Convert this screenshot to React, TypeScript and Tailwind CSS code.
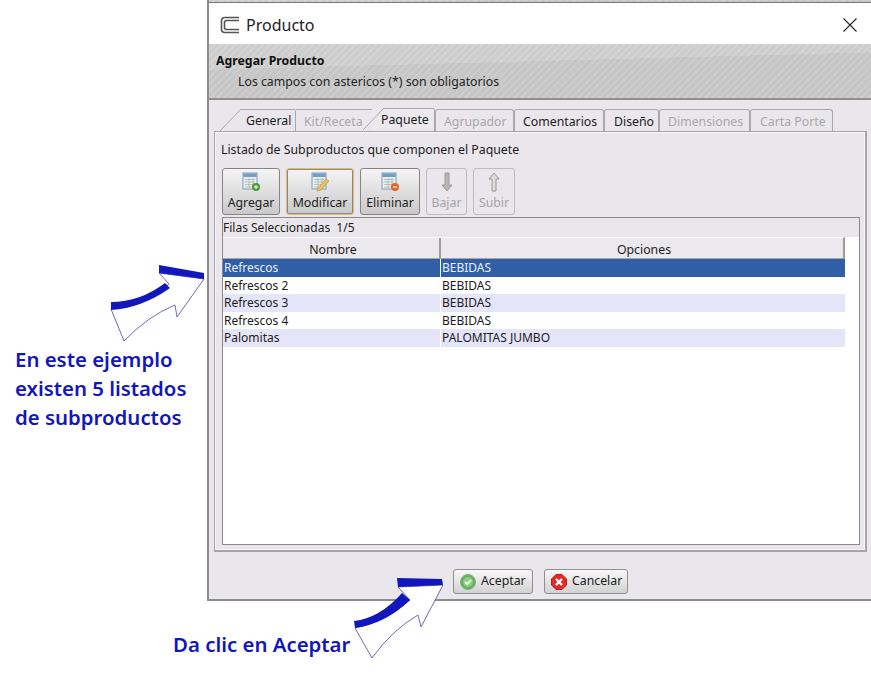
const hatch =
  "bg-[linear-gradient(178.5deg,transparent_36%,rgba(0,0,0,0.035)_36%),repeating-linear-gradient(135deg,#cdcdcd_0px,#cdcdcd_3px,#d4d4d4_3px,#d4d4d4_5px)]";

const tabs = [
  { label: "General", width: "w-[76px]", pl: "pl-[26px]", slant: true },
  { label: "Kit/Receta", width: "w-[76px]", pl: "pl-[8px]", off: true, open: true },
  { label: "Paquete", width: "w-[63px]", pl: "pl-[9px]", active: true, slant: true },
  { label: "Agrupador", width: "w-[79px]", pl: "pl-[8px]", off: true },
  { label: "Comentarios", width: "w-[90px]", pl: "pl-[8px]" },
  { label: "Diseño", width: "w-[55px]", pl: "pl-[9px]" },
  { label: "Dimensiones", width: "w-[91px]", pl: "pl-[8px]", off: true },
  { label: "Carta Porte", width: "w-[83px]", pl: "pl-[9px]", off: true },
];

const rows = [
  ["Refrescos", "BEBIDAS"],
  ["Refrescos 2", "BEBIDAS"],
  ["Refrescos 3", "BEBIDAS"],
  ["Refrescos 4", "BEBIDAS"],
  ["Palomitas", "PALOMITAS JUMBO"],
];

const SheetIcon = ({ children }: { children?: React.ReactNode }) => (
  <svg width="20" height="20" viewBox="0 0 20 20" className="block">
    <rect x="2" y="1" width="14" height="16" fill="#e8eef4" stroke="#7e9bb4" />
    <rect x="2.5" y="1.5" width="13" height="3.5" fill="#6f9ec6" />
    <path d="M4 7.5h10M4 10h10M4 12.5h10M4 15h10M8 6v10M12 6v10" stroke="#a9b9a0" strokeWidth="0.8" />
    {children}
  </svg>
);

const ArrowIcon = ({ down }: { down?: boolean }) => (
  <svg width="14" height="20" viewBox="0 0 14 20" className="block">
    <path
      d={down ? "M5 1h4v12h3l-5 6-5-6h3z" : "M5 19h4V7h3L7 1 2 7h3z"}
      fill={down ? "#b5b5b5" : "#dcdcdc"}
      stroke="#9a9a9a"
    />
  </svg>
);

const ToolButton = ({
  label,
  width,
  icon,
  focus,
  off,
}: {
  label: string;
  width: string;
  icon: React.ReactNode;
  focus?: boolean;
  off?: boolean;
}) => (
  <div
    className={`${width} h-[47px] flex flex-col items-center rounded-[3px] border pt-[3px] ${
      off
        ? "border-[#bdbcc0] bg-[#e9e7ec] text-[#a5a5a8]"
        : focus
          ? "border-[#e9b767] bg-gradient-to-b from-[#f5f5f5] to-[#c9c9c9] text-[#1c1c1c] shadow-[inset_0_0_0_1px_#8a8a8a]"
          : "border-[#858585] bg-gradient-to-b from-[#f5f5f5] to-[#c9c9c9] text-[#1c1c1c]"
    }`}
  >
    {icon}
    <span className="mt-[3px] leading-[16px]">{label}</span>
  </div>
);

const FooterButton = ({ label, width, icon }: { label: string; width: string; icon: React.ReactNode }) => (
  <div
    className={`${width} h-[25px] flex items-center gap-[5px] pl-[6px] rounded-[3px] border border-[#8f8f8f] bg-gradient-to-b from-[#f8f8f8] to-[#d2d2d2] text-[#1c1c1c]`}
  >
    {icon}
    <span>{label}</span>
  </div>
);

export default function App() {
  return (
    <div className="relative w-[871px] h-[674px] overflow-hidden bg-white font-['Noto_Sans',sans-serif]">
      <div className="flex h-[601px]">
        {/* left note */}
        <div className="w-[207px] pl-[15px] pt-[345px] text-[20.400px] leading-[29px] font-semibold text-[#1216bd]">
          <p>En este ejemplo</p>
          <p>existen 5 listados</p>
          <p>de subproductos</p>
        </div>

        {/* window */}
        <div className="w-[664px] flex flex-col border-l-2 border-b-2 border-[#8c8c8c] text-[12.300px] text-[#1c1c1c]">
          <div className={`h-[3px] ${hatch} border-b border-[#777]`} />
          <div className="h-[41px] bg-white flex items-center pl-[11px] pr-[13px] pt-[2px] shrink-0">
            <svg width="20" height="18" viewBox="0 0 20 18" fill="none" stroke="#555" className="mr-[6px]">
              <path d="M19 1.5H5Q1.5 1.5 1.5 5v8q0 3.5 3.5 3.5h14" strokeWidth="1.6" />
              <path d="M19 4.5H6.5Q4.5 4.5 4.5 6.5v5q0 2 2 2H19" strokeWidth="1.6" />
            </svg>
            <span className="text-[16px] text-[#222]">Producto</span>
            <svg width="16" height="16" viewBox="0 0 16 16" stroke="#222" strokeWidth="1.1" className="ml-auto">
              <path d="M1.5 1.5l13 13M14.5 1.5l-13 13" />
            </svg>
          </div>
          <div className={`h-[56px] shrink-0 ${hatch} border-b-2 border-[#8f8f8f] pl-[7px] pt-[8px]`}>
            <p className="font-bold leading-[17px] text-[#111]">Agregar Producto</p>
            <p className="pl-[22px] mt-[5px] leading-[16px] text-[#222]">Los campos con astericos (*) son obligatorios</p>
          </div>

          <div className="flex-1 bg-[#e9e7ec] flex flex-col">
            {/* tabs */}
            <div className="flex h-[22px] mt-[9px] ml-[6px] pl-[5px] shrink-0 relative z-10 items-end">
              {tabs.map((t) => (
                <div
                  key={t.label}
                  className={`relative ${t.width} ${t.pl} h-[22px] leading-[23px] border-[#a9a9ad] ${
                    t.slant ? "border-r rounded-tr-[3px]" : t.open ? "border-t" : "border-t border-r rounded-tr-[3px]"
                  } ${t.off ? "text-[#a7a7aa]" : t.active ? "text-[#1c1c1c] bg-[#ebe9ee] h-[23px]" : "text-[#1c1c1c]"} ${
                    t.slant || t.open ? "" : "border-l rounded-tl-[3px]"
                  }`}
                >
                  {t.slant && (
                    <>
                      <svg
                        width="24"
                        height="23"
                        viewBox="0 0 24 23"
                        className={`absolute top-[-1px] ${t.active ? "left-[-10px]" : "left-[-1px]"}`}
                      >
                        <path d="M1 23L22 1" stroke="#a9a9ad" fill="none" />
                      </svg>
                      <span
                        className={`absolute top-0 right-0 h-px bg-[#a9a9ad] ${t.active ? "left-[11px]" : "left-[20px]"}`}
                      />
                    </>
                  )}
                  {t.label}
                </div>
              ))}
            </div>

            {/* tab panel */}
            <div className="w-[653px] h-[421px] ml-[5px] border border-[#a5a5a8] border-b-2 border-r-2 shadow-[inset_0_0_0_1px_#f7f7f9] flex flex-col pl-[7px] pr-[6px]">
              <p className="mt-[9px] -ml-px leading-[17px]">Listado de Subproductos que componen el Paquete</p>
              <div className="flex gap-[6px] mt-[10px] h-[47px] shrink-0">
                <ToolButton
                  label="Agregar"
                  width="w-[58px]"
                  icon={
                    <SheetIcon>
                      <circle cx="15" cy="15" r="4" fill="#4f9c3e" />
                      <path d="M13 15h4M15 13v4" stroke="#fff" />
                    </SheetIcon>
                  }
                />
                <ToolButton
                  label="Modificar"
                  width="w-[68px]"
                  focus
                  icon={
                    <SheetIcon>
                      <path d="M8 16l8-9 3 2-8 9-4 1z" fill="#ecc25f" stroke="#b48a3a" strokeWidth="0.6" />
                    </SheetIcon>
                  }
                />
                <ToolButton
                  label="Eliminar"
                  width="w-[60px]"
                  icon={
                    <SheetIcon>
                      <circle cx="15" cy="15" r="4" fill="#e0662a" />
                      <path d="M13 15h4" stroke="#fff" />
                    </SheetIcon>
                  }
                />
                <ToolButton label="Bajar" width="w-[41px]" off icon={<ArrowIcon down />} />
                <ToolButton label="Subir" width="w-[42px]" off icon={<ArrowIcon />} />
              </div>

              <div className="mt-[2px] w-[638px] h-[328px] border border-[#8a8a8a] flex flex-col">
                <p className="h-[19px] pt-[1px] text-[12px] leading-[18px]">Filas Seleccionadas&nbsp; 1/5</p>
                <div className="flex-1 bg-white flex flex-col">
                  <div className="flex h-[22px] bg-[#ebe9ee] w-[622px] border-t border-white border-r-2 border-r-[#9a9a9a] border-b border-b-[#a5a5a5]">
                    <div className="w-[218px] pl-[4px] text-center leading-[24px] border-r-2 border-[#9a9a9a]">Nombre</div>
                    <div className="flex-1 pl-[4px] text-center leading-[24px]">Opciones</div>
                  </div>
                  {rows.map(([a, b], i) => (
                    <div
                      key={a}
                      className={`flex h-[17.5px] w-[622px] text-[12px] leading-[17.5px] ${
                        i === 0 ? "bg-[#305fa8] text-[#e8eef8]" : i % 2 === 0 ? "bg-[#e5e5fa]" : "bg-white"
                      }`}
                    >
                      <div className="w-[218px] pl-[1px] border-r border-white">{a}</div>
                      <div className="flex-1 pl-px">{b}</div>
                    </div>
                  ))}
                </div>
              </div>
            </div>

            {/* bottom buttons */}
            <div className="flex gap-[11px] pl-[244px] mt-[17px]">
              <FooterButton
                label="Aceptar"
                width="w-[80px]"
                icon={
                  <svg width="16" height="16" viewBox="0 0 16 16">
                    <circle cx="8" cy="8" r="7.5" fill="#63b35b" stroke="#8aa98a" />
                    <circle cx="8" cy="8" r="5" fill="#8ccf80" />
                    <path d="M5 8l2.2 2.2L11 6" stroke="#fff" strokeWidth="1.8" fill="none" />
                  </svg>
                }
              />
              <FooterButton
                label="Cancelar"
                width="w-[84px]"
                icon={
                  <svg width="16" height="16" viewBox="0 0 16 16">
                    <path d="M5 .5h6L15.500 5v6L11 15.500H5L.5 11V5z" fill="#e22a2a" stroke="#c01818" />
                    <path d="M5 5l6 6M11 5l-6 6" stroke="#fff" strokeWidth="2.400" />
                  </svg>
                }
              />
            </div>
          </div>
        </div>
      </div>

      <p className="pl-[173px] mt-[29px] text-[20.400px] leading-[28px] font-semibold text-[#1216bd]">Da clic en Aceptar</p>

      {/* callout arrows */}
      <svg width="871" height="674" viewBox="0 0 871 674" className="absolute inset-0 pointer-events-none">
        <path
          d="M111 309L124 341Q148 316 175 305L177 317L204 279L159 273L169 284Q140 306 111 309Z"
          fill="#fff"
          stroke="#6c6cbc"
        />
        <path d="M159 265L204 273V279L159 273Z" fill="#1216bd" />
        <path d="M111 302Q140 302 165 283L170 288Q142 308 111 310Z" fill="#1216bd" />
        <path
          d="M355 628L372 658Q392 630 418 615L421 627L443 585L398 587L410 600Q385 622 355 628Z"
          fill="#fff"
          stroke="#6c6cbc"
        />
        <path d="M397 578L442 579L443 585L398 587Z" fill="#1216bd" />
        <path d="M354 621Q380 618 402 593L410 600Q385 624 355 628Z" fill="#1216bd" />
      </svg>
    </div>
  );
}
